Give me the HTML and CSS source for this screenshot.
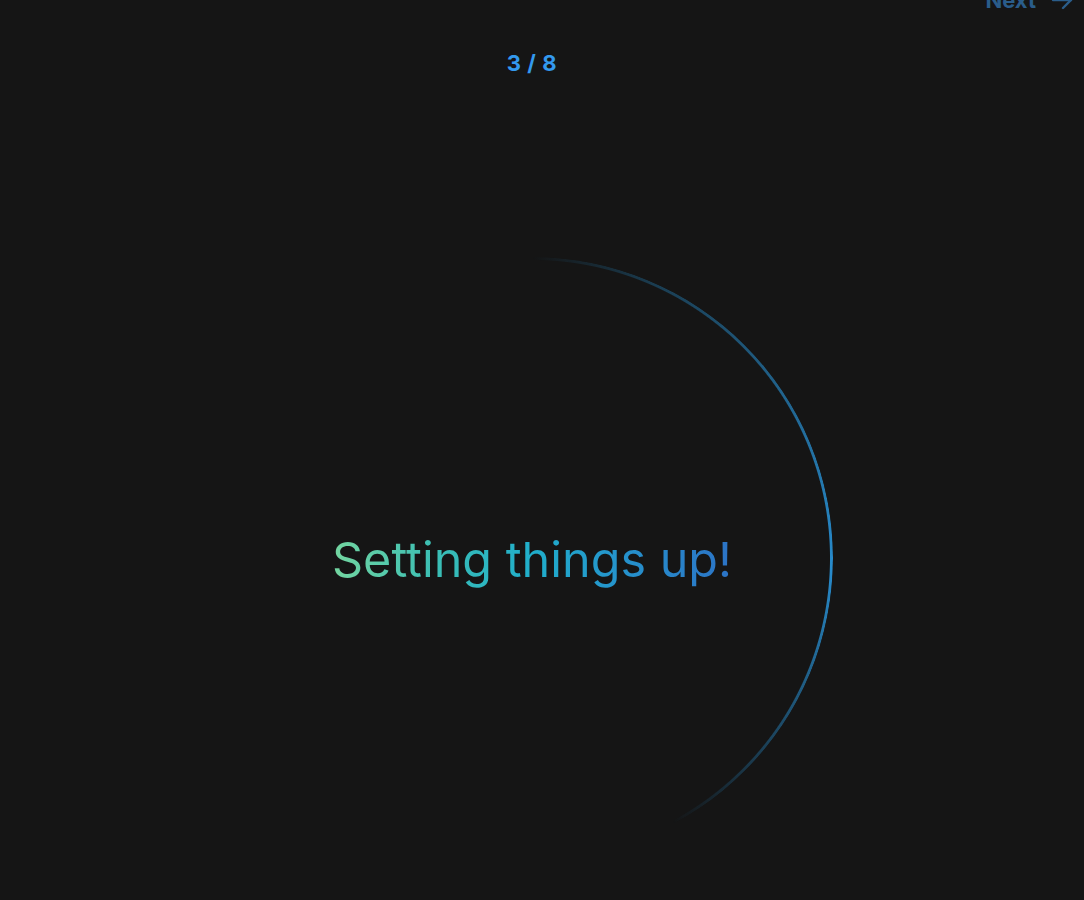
FILE: index.html
```html
<!DOCTYPE html>
<html lang="en">
<head>
<meta charset="utf-8">
<title>Setting things up</title>
<link rel="stylesheet" href="styles.css">
</head>
<body>
<div class="page">
  <header class="topbar">
    <button class="next-btn" type="button">
      <span>Next</span>
      <svg class="next-icon" width="24" height="24" viewBox="0 0 24 24" fill="none" stroke="currentColor" stroke-width="2.4" stroke-linecap="round" stroke-linejoin="round"><path d="M3 12h18"/><path d="M13 4l8 8-8 8"/></svg>
    </button>
  </header>
  <main class="content">
    <div class="counter">3 / 8</div>
    <div class="stage">
      <div class="ring"></div>
      <h1 class="title">Setting things up!</h1>
    </div>
  </main>
</div>
</body>
</html>
```
FILE: styles.css
```css
html, body {
  margin: 0;
  padding: 0;
  background: #151515;
  height: 100%;
  overflow: hidden;
}

body {
  font-family: Inter, "Noto Sans", "Liberation Sans", sans-serif;
  color: #e0e0e0;
}

.page {
  width: 1084px;
  display: flex;
  flex-direction: column;
}

.topbar {
  display: flex;
  justify-content: flex-end;
  padding-right: 10px;
  margin-top: -12px;
  height: 24px;
}

.next-btn {
  display: flex;
  align-items: center;
  gap: 14px;
  background: none;
  border: 0;
  padding: 0;
  font-family: inherit;
  font-size: 22px;
  font-weight: 700;
  line-height: 24px;
  color: #2a5d8a;
  cursor: pointer;
}

.next-icon {
  display: block;
}

.content {
  width: 1064px;
  display: flex;
  flex-direction: column;
  align-items: center;
}

.counter {
  margin-top: 37px;
  font-size: 22px;
  font-weight: 700;
  line-height: 28px;
  color: #3399ee;
  letter-spacing: 0.6px;
}

.stage {
  margin-top: 180px;
  display: grid;
  place-items: center;
}

.ring,
.title {
  grid-area: 1 / 1;
}

.ring {
  width: 602px;
  height: 602px;
  border-radius: 50%;
  background: conic-gradient(from 0deg,
    rgba(38, 140, 200, 0) 0deg,
    rgba(38, 140, 200, 0.35) 25deg,
    rgba(40, 140, 205, 1) 92deg,
    rgba(38, 135, 195, 0.4) 128deg,
    rgba(38, 135, 195, 0) 152deg,
    rgba(38, 135, 195, 0) 360deg);
  -webkit-mask: radial-gradient(circle closest-side, transparent calc(100% - 3.5px), #000 calc(100% - 2.5px));
  mask: radial-gradient(circle closest-side, transparent calc(100% - 3.5px), #000 calc(100% - 2.5px));
}

.title {
  margin: 0;
  font-size: 48.5px;
  font-weight: 400;
  line-height: 56px;
  letter-spacing: 0;
  background: linear-gradient(90deg, #74d6a0 0%, #3cbfb4 25%, #20aecb 50%, #2593cc 72%, #2c73c6 100%);
  -webkit-background-clip: text;
  background-clip: text;
  color: transparent;
  position: relative;
  top: 2px;
}
```
